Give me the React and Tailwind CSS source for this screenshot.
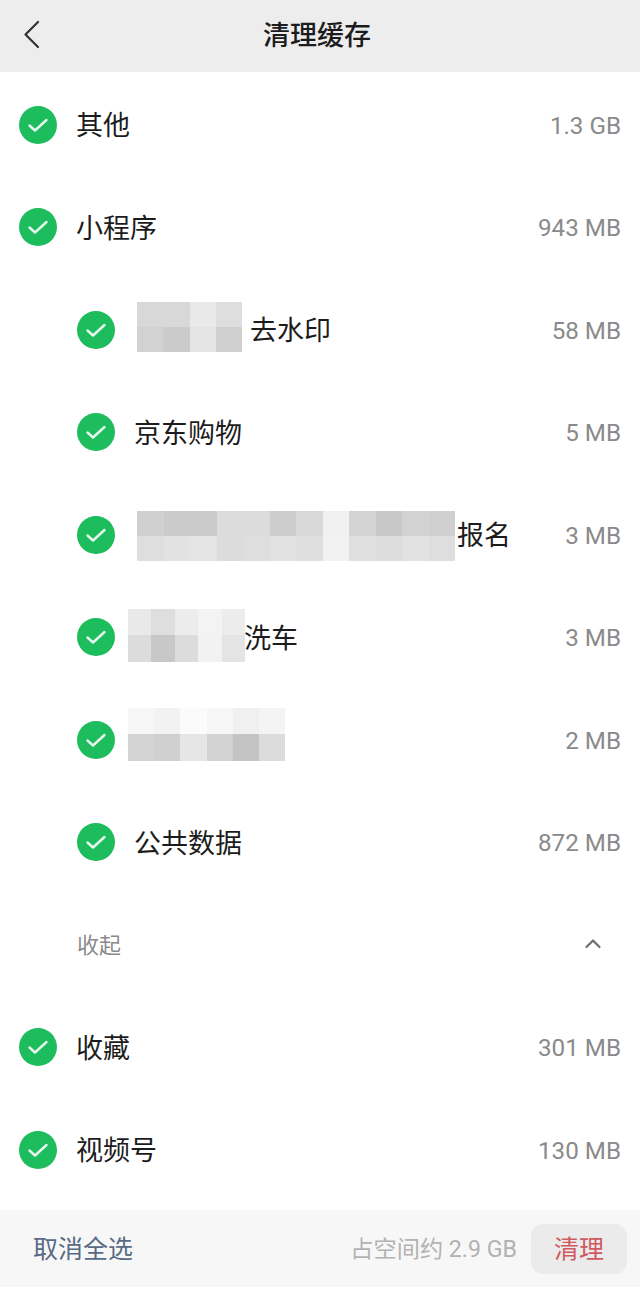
const FONT = { fontFamily: 'Roboto, "Noto Sans CJK SC", sans-serif' };

// pixelated blur blocks, one array per mosaic row
const mosaicA = [
  ["#d8d8d8", "#d8d8d8", "#e9e9e9", "#dedede"],
  ["#d2d2d2", "#cbcbcb", "#e4e4e4", "#cfcfcf"],
];
const mosaicB = [
  ["#d0d0d0", "#cbcbcb", "#cbcbcb", "#dcdcdc", "#dcdcdc", "#cdcdcd", "#d8d8d8", "#f0f0f0", "#d4d4d4", "#c8c8c8", "#d2d2d2", "#cfcfcf"],
  ["#dedede", "#e2e2e2", "#e4e4e4", "#dcdcdc", "#dedede", "#e2e2e2", "#dfdfdf", "#f2f2f2", "#e0e0e0", "#dddddd", "#e2e2e2", "#dedede"],
];
const mosaicC = [
  ["#e9e9e9", "#dedede", "#ececec", "#f3f3f3", "#ececec"],
  ["#dcdcdc", "#c8c8c8", "#dcdcdc", "#f2f2f2", "#e4e4e4"],
];
const mosaicD = [
  ["#f6f6f6", "#f2f2f2", "#fbfbfb", "#f6f6f6", "#f0f0f0", "#f4f4f4"],
  ["#d4d4d4", "#d0d0d0", "#e6e6e6", "#d2d2d2", "#c4c4c4", "#dcdcdc"],
];

function Check() {
  return (
    <span className="flex h-[38px] w-[38px] shrink-0 items-center justify-center rounded-full bg-[#1dbd5d]">
      <svg width="24" height="24" viewBox="0 0 24 24" fill="none" stroke="#e8f8ee" strokeWidth="2.4" strokeLinecap="round" strokeLinejoin="round">
        <path d="M3.5 12.5l5.5 5L20.5 7" />
      </svg>
    </span>
  );
}

function Mosaic({ rows, rowClass, className }) {
  return (
    <div className={`flex shrink-0 flex-col ${className}`}>
      {rows.map((row, i) => (
        <div key={i} className={`flex ${rowClass}`}>
          {row.map((color, j) => (
            <div key={j} className="h-full flex-1" style={{ background: color }} />
          ))}
        </div>
      ))}
    </div>
  );
}

function Row({ sub, size, children }) {
  return (
    <div className={`flex h-[102.5px] items-center pr-[19px] ${sub ? "pl-[77px]" : "pl-[19px]"}`}>
      <Check />
      <div className="flex min-w-0 flex-1 items-center text-[27px] text-[#1c1c1c]">{children}</div>
      <span className="pt-[2px] text-[24.2px] text-[#8a8a8a]">{size}</span>
    </div>
  );
}

export default function App() {
  return (
    <div className="flex h-[1289px] w-[640px] flex-col bg-white" style={FONT}>
      {/* HEADER */}
      <div className="relative flex h-[72px] items-center bg-[#ededed]">
        <svg width="18" height="30" viewBox="0 0 18 30" fill="none" stroke="#333333" strokeWidth="2.2" strokeLinecap="round" strokeLinejoin="round" className="absolute left-[23px] top-[20px]">
          <path d="M15 2L2.5 14.5 15 27" />
        </svg>
        <span className="ml-[263px] text-[27px] font-medium leading-none text-[#1c1c1c]">清理缓存</span>
      </div>

      {/* LIST */}
      <div className="flex-1 pt-[1.5px]">
        <Row size="1.3 GB"><span className="ml-[19px] pt-[3px]">其他</span></Row>
        <Row size="943 MB"><span className="ml-[19px] pt-[3px]">小程序</span></Row>
        <Row sub size="58 MB">
          <Mosaic rows={mosaicA} rowClass="h-[25px]" className="mb-[6px] ml-[22px] w-[105px]" />
          <span className="ml-[8px] pt-[3px]">去水印</span>
        </Row>
        <Row sub size="5 MB"><span className="ml-[19px] pt-[3px]">京东购物</span></Row>
        <Row sub size="3 MB">
          <Mosaic rows={mosaicB} rowClass="h-[25px]" className="mt-[3px] ml-[22px] w-[318px]" />
          <span className="ml-[2px] pt-[3px]">报名</span>
        </Row>
        <Row sub size="3 MB">
          <Mosaic rows={mosaicC} rowClass="h-[26.5px]" className="mb-[4px] ml-[13px] w-[117px]" />
          <span className="-ml-[1px] pt-[3px]">洗车</span>
        </Row>
        <Row sub size="2 MB">
          <Mosaic rows={mosaicD} rowClass="h-[26.5px]" className="mb-[11px] ml-[13px] w-[157px]" />
        </Row>
        <Row sub size="872 MB"><span className="ml-[19px] pt-[3px]">公共数据</span></Row>
        <div className="flex h-[102.5px] items-center justify-between pl-[77px] pr-[38px]">
          <span className="pt-[2px] text-[22px] text-[#8a8a8a]">收起</span>
          <svg width="18" height="12" viewBox="0 0 18 12" fill="none" stroke="#6e6e6e" strokeWidth="2.2" strokeLinecap="round" strokeLinejoin="round" className="mb-1">
            <path d="M2.5 10L9 3.5l6.5 6.5" />
          </svg>
        </div>
        <Row size="301 MB"><span className="ml-[19px] pt-[3px]">收藏</span></Row>
        <Row size="130 MB"><span className="ml-[19px] pt-[3px]">视频号</span></Row>
      </div>

      {/* FOOTER */}
      <div className="mb-[2px] flex h-[77px] items-center bg-[#f7f7f7] pl-[33px] pr-[13px]">
        <span className="pt-[2px] text-[25px] text-[#576b85]">取消全选</span>
        <span className="ml-auto pt-[2px] text-[23.2px] text-[#b2b2b2]">占空间约 2.9 GB</span>
        <button className="ml-[14px] h-[50px] w-[96px] rounded-xl bg-[#ebebeb] pt-[2px] text-[25px] text-[#cf5a5f]">清理</button>
      </div>
    </div>
  );
}
